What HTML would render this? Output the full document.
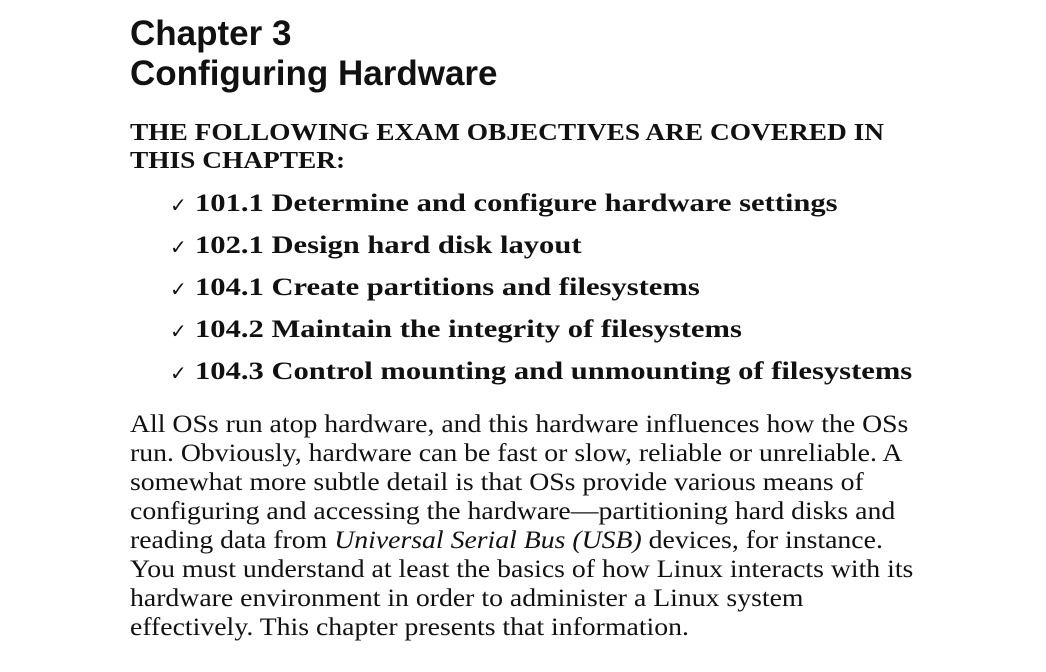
<!DOCTYPE html>
<html><head><meta charset="utf-8"><style>
body{margin:0;background:#fff;width:1046px;height:672px;overflow:hidden;color:#111;}
.a{position:absolute;left:130px;white-space:nowrap;transform-origin:0 0;}
h1{position:absolute;left:130px;margin:0;font:bold 35px/40px "Liberation Sans",sans-serif;}
.o{font:bold 24px "Liberation Serif",serif;transform:scaleX(1.14);}
.ck{position:absolute;left:170px;font:20px "DejaVu Sans",sans-serif;}
.li{position:absolute;left:195px;white-space:nowrap;font:bold 25px "Liberation Serif",serif;transform-origin:0 0;transform:scaleX(1.223);}
.p{font:25px "Liberation Serif",serif;transform:scaleX(1.11);}
</style></head><body>
<h1 style="top:14px">Chapter 3</h1>
<h1 style="top:54px">Configuring Hardware</h1>
<div class="a o" style="top:120px">THE FOLLOWING EXAM OBJECTIVES ARE COVERED IN</div>
<div class="a o" style="top:148px">THIS CHAPTER:</div>
<div class="ck" style="top:193px">✓</div><div class="li" style="top:190px">101.1 Determine and configure hardware settings</div>
<div class="ck" style="top:235px">✓</div><div class="li" style="top:232px">102.1 Design hard disk layout</div>
<div class="ck" style="top:277px">✓</div><div class="li" style="top:274px">104.1 Create partitions and filesystems</div>
<div class="ck" style="top:319px">✓</div><div class="li" style="top:316px">104.2 Maintain the integrity of filesystems</div>
<div class="ck" style="top:361px">✓</div><div class="li" style="top:358px">104.3 Control mounting and unmounting of filesystems</div>
<div class="a p" style="top:411px">All OSs run atop hardware, and this hardware influences how the OSs</div>
<div class="a p" style="top:440px">run. Obviously, hardware can be fast or slow, reliable or unreliable. A</div>
<div class="a p" style="top:469px">somewhat more subtle detail is that OSs provide various means of</div>
<div class="a p" style="top:498px">configuring and accessing the hardware—partitioning hard disks and</div>
<div class="a p" style="top:527px">reading data from <i>Universal Serial Bus (USB)</i> devices, for instance.</div>
<div class="a p" style="top:556px">You must understand at least the basics of how Linux interacts with its</div>
<div class="a p" style="top:585px">hardware environment in order to administer a Linux system</div>
<div class="a p" style="top:614px">effectively. This chapter presents that information.</div>
</body></html>
